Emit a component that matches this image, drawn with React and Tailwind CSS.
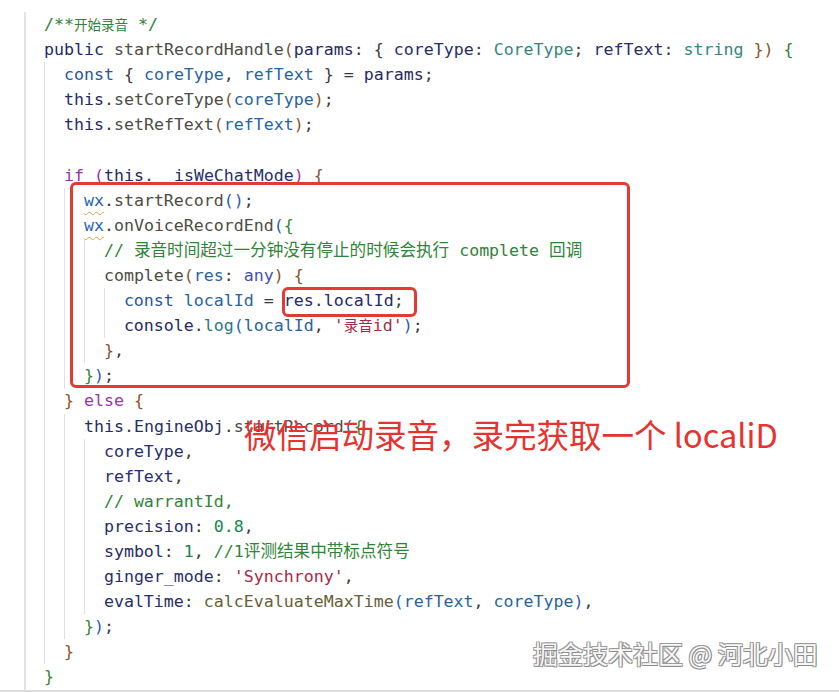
import React from "react";

const C = {
  cm: "text-[#2f8439]",
  kw: "text-[#9636ab]",
  pub: "text-[#222a68]",
  cn: "text-[#2a569c]",
  th: "text-[#242a66]",
  fn: "text-[#4d4c46]",
  fn2: "text-[#675f38]",
  pr: "text-[#272e6a]",
  v: "text-[#27649f]",
  ty: "text-[#348683]",
  num: "text-[#178454]",
  str: "text-[#a62a45]",
  p: "text-[#3a3a3a]",
  br: "text-[#84542c]",
  gr: "text-[#348434]",
  bl: "text-[#2a5db0]",
  pu: "text-[#9636ab]",
  any: "text-[#454fae]",
  log: "text-[#297982]",
  wx: "text-[#2866b0] underline decoration-wavy decoration-[#d9a13b] decoration-1 underline-offset-[5px]",
  sm: "text-[#2f8439] text-[13.5px]",
  smstr: "text-[#a62a45] text-[14.5px]",
};

const rows = [
  [0, [["/**", "cm"], ["开始录音", "sm"], [" */", "cm"]]],
  [0, [["public", "pub"], [" "], ["startRecordHandle", "fn"], ["(", "br"], ["params", "th"], [": { "], ["coreType", "pr"], [": "], ["CoreType", "ty"], ["; "], ["refText", "pr"], [": "], ["string", "ty"], [" "], ["})", "br"], [" "], ["{", "gr"]]],
  [1, [["const", "cn"], [" { "], ["coreType", "v"], [", "], ["refText", "v"], [" } = "], ["params", "th"], [";"]]],
  [1, [["this", "th"], ["."], ["setCoreType", "fn"], ["(", "br"], ["coreType", "v"], [")", "br"], [";"]]],
  [1, [["this", "th"], ["."], ["setRefText", "fn"], ["(", "br"], ["refText", "v"], [")", "br"], [";"]]],
  [1, []],
  [1, [["if", "kw"], [" "], ["(", "pu"], ["this", "th"], [".  "], ["isWeChatMode", "pr"], [")", "pu"], [" "], ["{", "br"]]],
  [2, [["wx", "wx"], ["."], ["startRecord", "fn"], ["()", "bl"], [";"]]],
  [2, [["wx", "wx"], ["."], ["onVoiceRecordEnd", "fn"], ["(", "bl"], ["{", "gr"]]],
  [3, [["// 录音时间超过一分钟没有停止的时候会执行 complete 回调", "cm"]]],
  [3, [["complete", "fn"], ["(", "br"], ["res", "v"], [": "], ["any", "any"], [")", "br"], [" "], ["{", "br"]]],
  [4, [["const", "cn"], [" "], ["localId", "v"], [" = "], ["res", "th"], ["."], ["localId", "th"], [";"]]],
  [4, [["console", "th"], ["."], ["log", "log"], ["(", "bl"], ["localId", "v"], [", "], ["'", "str"], ["录音", "smstr"], ["id'", "str"], [")", "bl"], [";"]]],
  [3, [["}", "br"], [","]]],
  [2, [["}", "gr"], [")", "bl"], [";"]]],
  [1, [["}", "br"], [" "], ["else", "kw"], [" "], ["{", "br"]]],
  [2, [["this", "th"], ["."], ["EngineObj", "pr"], ["."], ["startRecord", "fn"], ["(", "bl"], ["{", "gr"]]],
  [3, [["coreType", "pr"], [","]]],
  [3, [["refText", "pr"], [","]]],
  [3, [["// warrantId,", "cm"]]],
  [3, [["precision", "pr"], [": "], ["0.8", "num"], [","]]],
  [3, [["symbol", "pr"], [": "], ["1", "num"], [", "], ["//1评测结果中带标点符号", "cm"]]],
  [3, [["ginger_mode", "pr"], [": "], ["'Synchrony'", "str"], [","]]],
  [3, [["evalTime", "pr"], [": "], ["calcEvaluateMaxTime", "fn2"], ["(", "bl"], ["refText", "v"], [", "], ["coreType", "v"], [")", "bl"], [","]]],
  [2, [["}", "gr"], [")", "bl"], [";"]]],
  [1, [["}", "br"]]],
  [0, [["}", "gr"]]],
];

function Row({ level, tokens }) {
  return (
    <div className="flex h-[25.1px] items-stretch">
      {Array.from({ length: level }).map((_, i) => (
        <span key={i} className="w-[2ch] shrink-0 border-l border-[#e0e0e0]" />
      ))}
      <span className="self-center whitespace-pre leading-[25.1px]">
        {tokens.map(([t, c], i) => (
          <span key={i} className={C[c || "p"]}>
            {t}
          </span>
        ))}
      </span>
    </div>
  );
}

export default function App() {
  return (
    <div className="relative h-[692px] w-[839px] overflow-hidden border-b-2 border-[#dcdcdc] bg-white">
      <div className="h-full pl-[24px] pt-[12px]">
        <div className="h-full border-l-2 border-[#e4e4e4] pl-[18px] font-['DejaVu_Sans_Mono','Noto_Sans_CJK_SC',monospace] text-[16.6px]">
          {rows.map(([level, tokens], i) => (
            <Row key={i} level={level} tokens={tokens} />
          ))}
        </div>
      </div>

      {/* red highlight boxes */}
      <div className="absolute left-[70px] top-[182px] h-[206px] w-[560px] rounded-[6px] border-[3px] border-[#e23a35]" />
      <div className="absolute left-[282px] top-[287px] h-[30px] w-[135px] rounded-[6px] border-[3px] border-[#e23a35]" />

      {/* annotation */}
      <div className="absolute left-[244px] top-[418px] whitespace-pre font-['Noto_Sans_CJK_SC',sans-serif] text-[32.5px] leading-none text-[#e6332f]">
        微信启动录音，录完获取一个 localiD
      </div>

      {/* watermark */}
      <div className="absolute left-[533px] top-[641px] whitespace-pre font-['Noto_Sans_CJK_SC',sans-serif] text-[25px] leading-none text-[#f7f7f7] [text-shadow:1px_1px_0_#8a8a8a,-1px_-1px_0_#9a9a9a,1px_-1px_0_#9a9a9a,-1px_1px_0_#9a9a9a]">
        掘金技术社区 @ 河北小田
      </div>
    </div>
  );
}
